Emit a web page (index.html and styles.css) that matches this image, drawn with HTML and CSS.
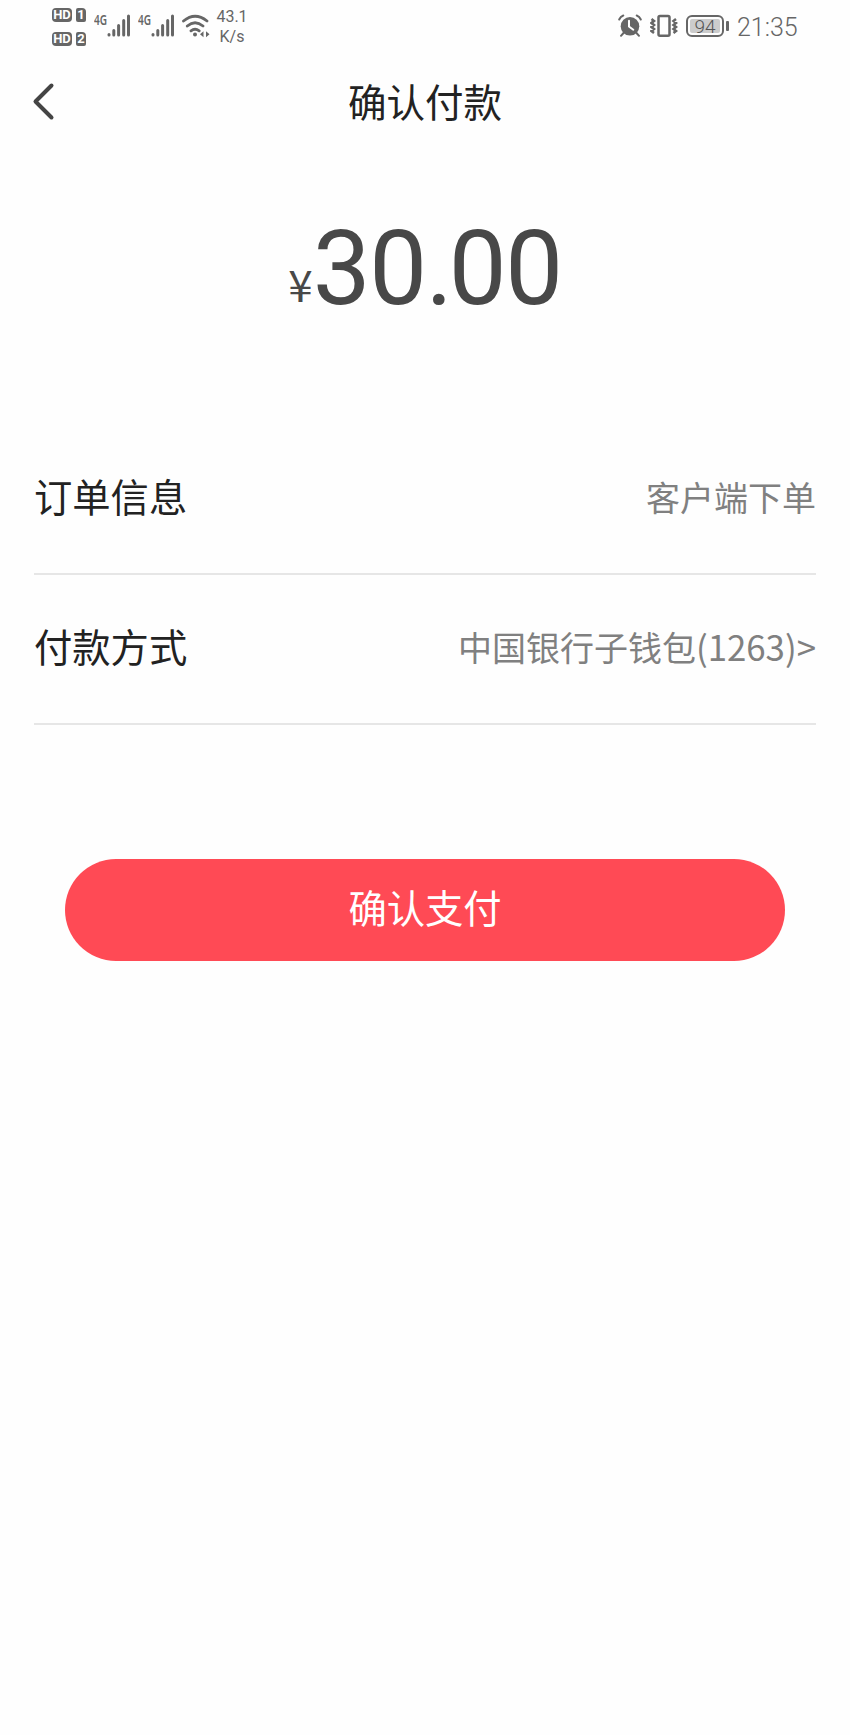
FILE: index.html
```
<!DOCTYPE html>
<html lang="zh-CN">
<head>
    <meta charset="UTF-8">
    <title>确认付款</title>
    <link rel="stylesheet" href="styles.css">
</head>
<body>
<div class="status">
    <div class="hd">
        <div class="hd-row"><span class="tag">HD</span><span class="tag num">1</span></div>
        <div class="hd-row"><span class="tag">HD</span><span class="tag num">2</span></div>
    </div>
    <span class="net">4G</span>
    <svg class="signal" width="24" height="23" viewBox="0 0 24 23">
        <path d="M2 20.5v.5M6.8 16.5v4.5M11.6 11.5V21M16.7 6.5V21M21.5 2V21"/>
    </svg>
    <span class="net net2">4G</span>
    <svg class="signal" width="24" height="23" viewBox="0 0 24 23">
        <path d="M2 20.5v.5M6.8 16.5v4.5M11.6 11.5V21M16.7 6.5V21M21.5 2V21"/>
    </svg>
    <svg class="wifi" width="28" height="24" viewBox="0 0 28 24">
        <path class="arc" d="M1.5 7Q13 -2.5 25 7M5.3 12Q13 5.6 21 12M9 16.8Q13 13.6 17.2 16.8"/>
        <circle cx="13" cy="20.6" r="2"/>
        <path d="M18 20.2l3.5-3v6zM27.500 20.2l-3.500-3v6z"/>
    </svg>
    <div class="speed">43.1<br>K/s</div>
    <div class="right">
        <svg class="alarm" width="24" height="24" viewBox="0 0 24 24">
            <circle cx="12" cy="12.3" r="9.3"/>
            <path class="ear" d="M1.2 5.5Q2.5 2.5 5.3 1.5M22.8 5.5Q21.5 2.5 18.7 1.5M5.5 19L3 21.8M18.5 19L21 21.8"/>
            <path class="hand" d="M11 6.8V12.5L15.3 15.7"/>
        </svg>
        <svg class="vibrate" width="28" height="24" viewBox="0 0 28 24">
            <rect x="8.5" y="2" width="11" height="19.7" rx="1.5"/>
            <path d="M1.5 5l2.500 2-2.500 2 2.500 2-2.500 2 2.500 2-2.500 2 2.500 2M26 5l-2.500 2 2.500 2-2.500 2 2.500 2-2.500 2 2.500 2-2.500 2"/>
        </svg>
        <div class="battery"><span>94</span></div>
        <i class="cap"></i>
        <span class="time">21:35</span>
    </div>
</div>

<div class="header">
    <svg class="back" width="24" height="40" viewBox="0 0 24 40">
        <path d="M19.5 3.5L3.5 19.5L19.5 35.5"/>
    </svg>
    <h1>确认付款</h1>
</div>

<div class="amount"><span class="yen">¥</span>30<span class="dot">.</span>00</div>

<ul class="list">
    <li><span class="label">订单信息</span><span class="value">客户端下单</span></li>
    <li><span class="label">付款方式</span><span class="value">中国银行子钱包<span class="card">(1263)&gt;</span></span></li>
</ul>

<button class="pay">确认支付</button>
</body>
</html>
```
FILE: styles.css
```
* {
    padding: 0;
    margin: 0;
    list-style: none;
    box-sizing: border-box;
}

body {
    width: 850px;
    min-height: 1735px;
    background: #fefefe;
    font-family: Roboto, "Noto Sans CJK SC", sans-serif;
    color: #222;
}

/* status bar */
.status {
    display: flex;
    align-items: flex-start;
    height: 54px;
    padding-left: 52px;
    color: #666;
}

.hd-row {
    display: flex;
    gap: 4px;
    margin-top: 8px;
    height: 14px;
}

.hd-row + .hd-row {
    margin-top: 10px;
}

.tag {
    width: 20px;
    height: 14px;
    border-radius: 4px;
    background: #666;
    color: #fff;
    font-size: 13px;
    font-weight: bold;
    line-height: 14px;
    text-align: center;
}

.num {
    width: 10px;
    border-radius: 2px 4px 2px 2px;
}

.net {
    width: 13px;
    margin: 13px 0 0 8px;
    font-family: "Noto Sans", sans-serif;
    font-size: 14px;
    font-weight: 600;
    line-height: 14px;
    transform: scaleX(.72);
    transform-origin: left;
}

.net2 {
    margin-left: 7px;
}

.signal {
    margin-top: 14px;
    fill: none;
    stroke: #666;
    stroke-width: 3;
    stroke-linecap: round;
}

.wifi {
    margin: 14px 0 0 7px;
    fill: #666;
}

.wifi .arc {
    fill: none;
    stroke: #666;
    stroke-width: 2.8;
    stroke-linecap: round;
}

.speed {
    width: 32px;
    margin: 7px 0 0 6px;
    font-size: 16px;
    line-height: 20px;
    text-align: center;
    white-space: nowrap;
}

.right {
    display: flex;
    margin-left: auto;
    padding: 14px 51px 0 0;
}

.alarm {
    fill: #666;
}

.alarm .ear,
.alarm .hand {
    fill: none;
    stroke: #666;
    stroke-width: 2;
    stroke-linecap: round;
}

.alarm .hand {
    stroke: #fefefe;
}

.vibrate {
    margin-left: 8px;
    fill: none;
    stroke: #666;
    stroke-width: 2.5;
}

.battery {
    width: 38px;
    height: 22px;
    margin: 1px 0 0 8px;
    padding: 2px;
    border: 2px solid #666;
    border-radius: 6px;
}

.battery span {
    display: block;
    width: 30px;
    height: 14px;
    border-radius: 2px;
    background: #ccc;
    color: #555;
    font-size: 19px;
    font-weight: 300;
    line-height: 15px;
    text-align: center;
}

.cap {
    width: 3px;
    height: 10px;
    margin: 7px 0 0 2px;
    border-radius: 1px;
    background: #666;
}

.time {
    width: 62px;
    margin-left: 8px;
    font-size: 25px;
    line-height: 28px;
    font-weight: 300;
    white-space: nowrap;
}

/* title */
.header {
    display: flex;
    align-items: center;
    height: 96px;
    padding: 0 32px;
}

.back {
    fill: none;
    stroke: #444;
    stroke-width: 4;
    stroke-linecap: round;
    stroke-linejoin: round;
}

.header h1 {
    flex: 1;
    margin-right: 24px;
    padding-top: 4px;
    font-size: 38.5px;
    font-weight: normal;
    line-height: 54px;
    text-align: center;
}

.amount {
    height: 275px;
    padding-top: 59px;
    color: #484848;
    font-size: 103px;
    line-height: 120px;
    text-align: center;
    letter-spacing: -1.4px;
}

.yen {
    font-family: "Noto Sans CJK SC", sans-serif;
    font-size: 44px;
    line-height: 40px;
    letter-spacing: 0;
    vertical-align: 2px;
}

.dot {
    letter-spacing: -4px;
}

.list {
    padding: 0 34px;
}

.list li {
    display: flex;
    justify-content: space-between;
    align-items: center;
    height: 150px;
    border-bottom: 2px solid #e6e6e6;
}

.label {
    padding-bottom: 7px;
    font-size: 38.3px;
}

.value {
    color: #808080;
    font-size: 34px;
    line-height: 50px;
}

.card {
    font-family: "Noto Sans CJK SC", sans-serif;
    font-size: 34.8px;
    line-height: 40px;
}

.pay {
    display: block;
    width: 720px;
    height: 102px;
    margin: 134px auto 0;
    padding-bottom: 7px;
    border: 0;
    border-radius: 51px;
    background: #ff4a55;
    color: #fff;
    font-family: "Noto Sans CJK SC", sans-serif;
    font-size: 38.3px;
}
```
